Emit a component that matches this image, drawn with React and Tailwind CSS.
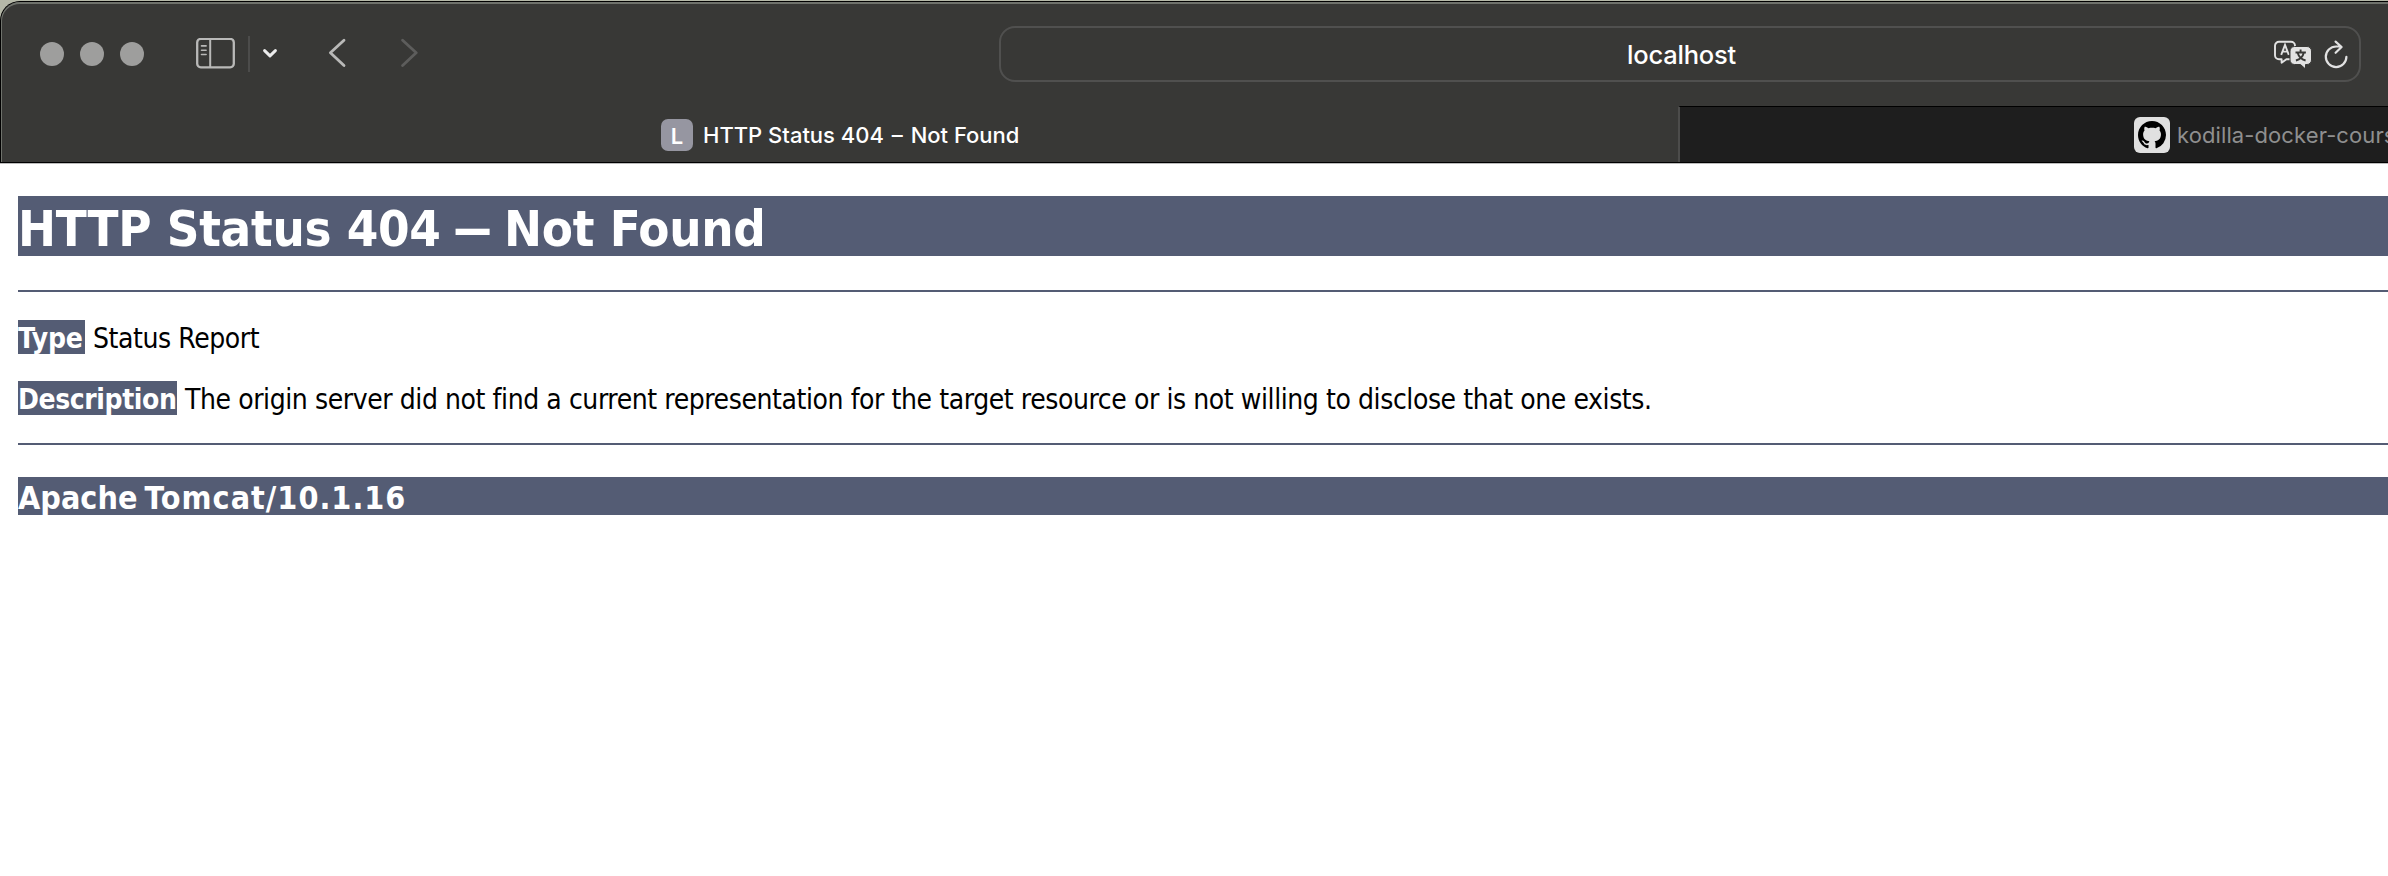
const fontUi = "font-['Inter',sans-serif]";
const fontPage = "font-['DejaVu_Sans_Condensed','DejaVu_Sans',sans-serif]";

function SidebarIcon() {
  return (
    <svg width="40" height="31" viewBox="0 0 40 31" fill="none" stroke="#b9b9b8" className="shrink-0">
      <rect x="1.2" y="0.9" width="36.6" height="28.4" rx="3.5" strokeWidth="2.3" />
      <path d="M14.2 1v28" strokeWidth="2" />
      <path d="M5.5 7.9h4.600M5.500 12.200h4.600M5.500 16.500h4.600" strokeWidth="1.6" strokeLinecap="round" />
    </svg>
  );
}

function Toolbar() {
  return (
    <div className="flex h-[102px] items-start pt-[22px] pl-[38px]">
      <div className="flex gap-4 pt-4">
        <span className="size-6 rounded-full bg-[#9e9e9d]" />
        <span className="size-6 rounded-full bg-[#9e9e9d]" />
        <span className="size-6 rounded-full bg-[#9e9e9d]" />
      </div>
      <div className="ml-[52px] flex pt-3">
        <SidebarIcon />
      </div>
      <div className="mt-[10px] ml-3 h-9 w-[2px] bg-[#4c4c4b]" />
      <svg width="16" height="12" viewBox="0 0 16 12" className="mt-[21px] ml-3" fill="none" stroke="#ececec" strokeWidth="3" strokeLinecap="round" strokeLinejoin="round">
        <path d="M2.6 3.6l5.4 5.2 5.4-5.2" />
      </svg>
      <svg width="18" height="30" viewBox="0 0 18 30" className="mt-3 ml-[50px]" fill="none" stroke="#b9b9b8" strokeWidth="2.8" strokeLinecap="round" strokeLinejoin="round">
        <path d="M16 2.2L2.4 14.800 16 27.600" />
      </svg>
      <svg width="18" height="30" viewBox="0 0 18 30" className="mt-3 ml-[55px]" fill="none" stroke="#5d5d5c" strokeWidth="2.8" strokeLinecap="round" strokeLinejoin="round">
        <path d="M1.600 2.200L15.200 14.800 1.600 27.600" />
      </svg>
      <div className="ml-[580px] flex h-14 w-[1362px] items-center rounded-[16px] border-2 border-[#50504f]">
        <span className="ml-[626px] pt-[2px] text-[25.5px] font-medium tracking-[-0.2px] text-white">localhost</span>
        <svg width="40" height="30" viewBox="0 0 40 30" className="mr-[11px] ml-auto" fill="none">
          <path d="M6 2.800h12a4 4 0 0 1 4 4v9.400a4 4 0 0 1-4 4h-4.600L8.600 23.800v-3.600H6a4 4 0 0 1-4-4V6.800a4 4 0 0 1 4-4z" stroke="#e2e2e2" strokeWidth="1.900" strokeLinejoin="round" />
          <path d="M8.200 15.800l3.800-9.800 3.800 9.800M9.600 12.600h4.800" stroke="#e2e2e2" strokeWidth="1.900" />
          <path d="M21.500 7.500H34a4.500 4.500 0 0 1 4.500 4.500V21a4.500 4.500 0 0 1-4.500 4.500h-1.500V30L27.500 25.500h-6A4.500 4.500 0 0 1 17 21v-9a4.500 4.500 0 0 1 4.500-4.500z" fill="#e2e2e2" stroke="#383836" strokeWidth="1" />
          <path d="M27.600 10.500v2.600M22.500 13.500h10.400M24.600 13.500c1 4 4 7 8 8M30.900 13.500c-1 4-4 7-8 8" stroke="#383836" strokeWidth="1.900" />
        </svg>
        <svg width="24" height="30" viewBox="0 0 24 30" className="mr-[11px]" fill="none" stroke="#e2e2e2" strokeWidth="2.200" strokeLinecap="round" strokeLinejoin="round">
          <path d="M22.400 17.800a10.300 10.300 0 1 1-10.300-10.300h4.500M11.600 2.600l6 5.400-6 5.800" />
        </svg>
      </div>
    </div>
  );
}

function GithubIcon() {
  return (
    <span className="flex size-9 shrink-0 items-center justify-center rounded-[6px] bg-[#e0e0e0]">
      <svg width="28" height="28" viewBox="0 0 16 16" fill="#000000">
        <path d="M8 0C3.580 0 0 3.580 0 8c0 3.540 2.290 6.530 5.470 7.590.4.070.55-.17.55-.38 0-.19-.01-.82-.01-1.490-2.010.37-2.530-.49-2.690-.94-.09-.23-.48-.94-.82-1.130-.28-.15-.68-.52-.01-.53.63-.01 1.080.58 1.230.82.72 1.210 1.870.87 2.330.66.07-.52.28-.87.51-1.070-1.780-.2-3.640-.89-3.640-3.950 0-.87.31-1.590.82-2.150-.08-.2-.36-1.020.08-2.120 0 0 .67-.21 2.200.82.64-.18 1.320-.27 2-.27s1.360.09 2 .27c1.530-1.040 2.200-.82 2.200-.82.44 1.100.16 1.920.08 2.120.51.56.82 1.270.82 2.150 0 3.070-1.870 3.750-3.650 3.950.29.25.54.73.54 1.480 0 1.070-.01 1.930-.01 2.200 0 .21.15.46.55.38A8.010 8.010 0 0 0 16 8c0-4.420-3.580-8-8-8z" />
      </svg>
    </span>
  );
}

function Tabs() {
  return (
    <div className="flex h-14">
      <div className="flex w-[1676px] shrink-0 items-center pt-[2px] pl-[659px]">
        <span className="flex size-8 items-center justify-center rounded-[7px] bg-[#9696a1] pt-[2px] text-[22px] font-semibold text-white">L</span>
        <span className="ml-[10px] text-[22px] font-medium whitespace-nowrap text-white">
          HTTP Status 404 <span className="mx-[2px]">–</span> Not Found
        </span>
      </div>
      <div className="flex min-w-0 flex-1 items-center overflow-hidden border-t border-l-2 border-t-black border-l-[#4c4c4b] bg-[#1e1e1e] pt-px pl-[454px]">
        <GithubIcon />
        <span className="ml-[7px] text-[22px] tracking-[0.1px] whitespace-nowrap text-[#8f8f8f]">kodilla-docker-course</span>
      </div>
    </div>
  );
}

export default function App() {
  return (
    <div className="flex h-[876px] w-[2388px] flex-col overflow-hidden bg-white">
      <div className="bg-[#b5b8a8] pt-px">
        <div className={`rounded-tl-[20px] border-t border-l border-black bg-[#383836] ${fontUi}`}>
          <div className="h-[160px] rounded-tl-[19px] border-t-2 border-l border-[#6f726c]">
            <Toolbar />
            <Tabs />
          </div>
        </div>
      </div>
      <div className="h-px shrink-0 bg-black" />
      <div className="h-px shrink-0 bg-[#bcbcbc]" />
      <main className={`flex flex-col pl-[18px] ${fontPage}`}>
        <h1 className="mt-[32px] h-[60px] bg-[#545c74] pt-[2.500px] text-[50.5px] leading-[60px] font-bold tracking-[-0.300px] whitespace-nowrap text-white">
          HTTP Status 404 <span className="mx-[5px] inline-block scale-x-[1.9]">–</span> Not Found
        </h1>
        <hr className="mt-[34px] h-[2px] border-0 bg-[#545c74]" />
        <p className="mt-[28px] flex h-[34px] text-[28px] leading-[34px] whitespace-nowrap text-black">
          <b className="h-[34px] w-[67px] bg-[#545c74] pt-[2px] tracking-[-0.2px] text-white">Type</b>
          <span className="ml-2 pt-[2px] tracking-[-0.42px]">Status Report</span>
        </p>
        <p className="mt-[27px] flex h-[34px] text-[28px] leading-[34px] whitespace-nowrap text-black">
          <b className="h-[34px] w-[159px] bg-[#545c74] pt-[2px] tracking-[-0.4px] text-white">Description</b>
          <span className="ml-2 pt-[2px] tracking-[-0.42px]">The origin server did not find a current representation for the target resource or is not willing to disclose that one exists.</span>
        </p>
        <hr className="mt-[28px] h-[2px] border-0 bg-[#545c74]" />
        <h3 className="mt-[32px] h-[38px] bg-[#545c74] pt-[2px] text-[32px] leading-[38px] font-bold [word-spacing:-3px] whitespace-nowrap text-white">
          Apache <span className="tracking-[1px]">Tomcat/10.1.16</span>
        </h3>
      </main>
    </div>
  );
}
